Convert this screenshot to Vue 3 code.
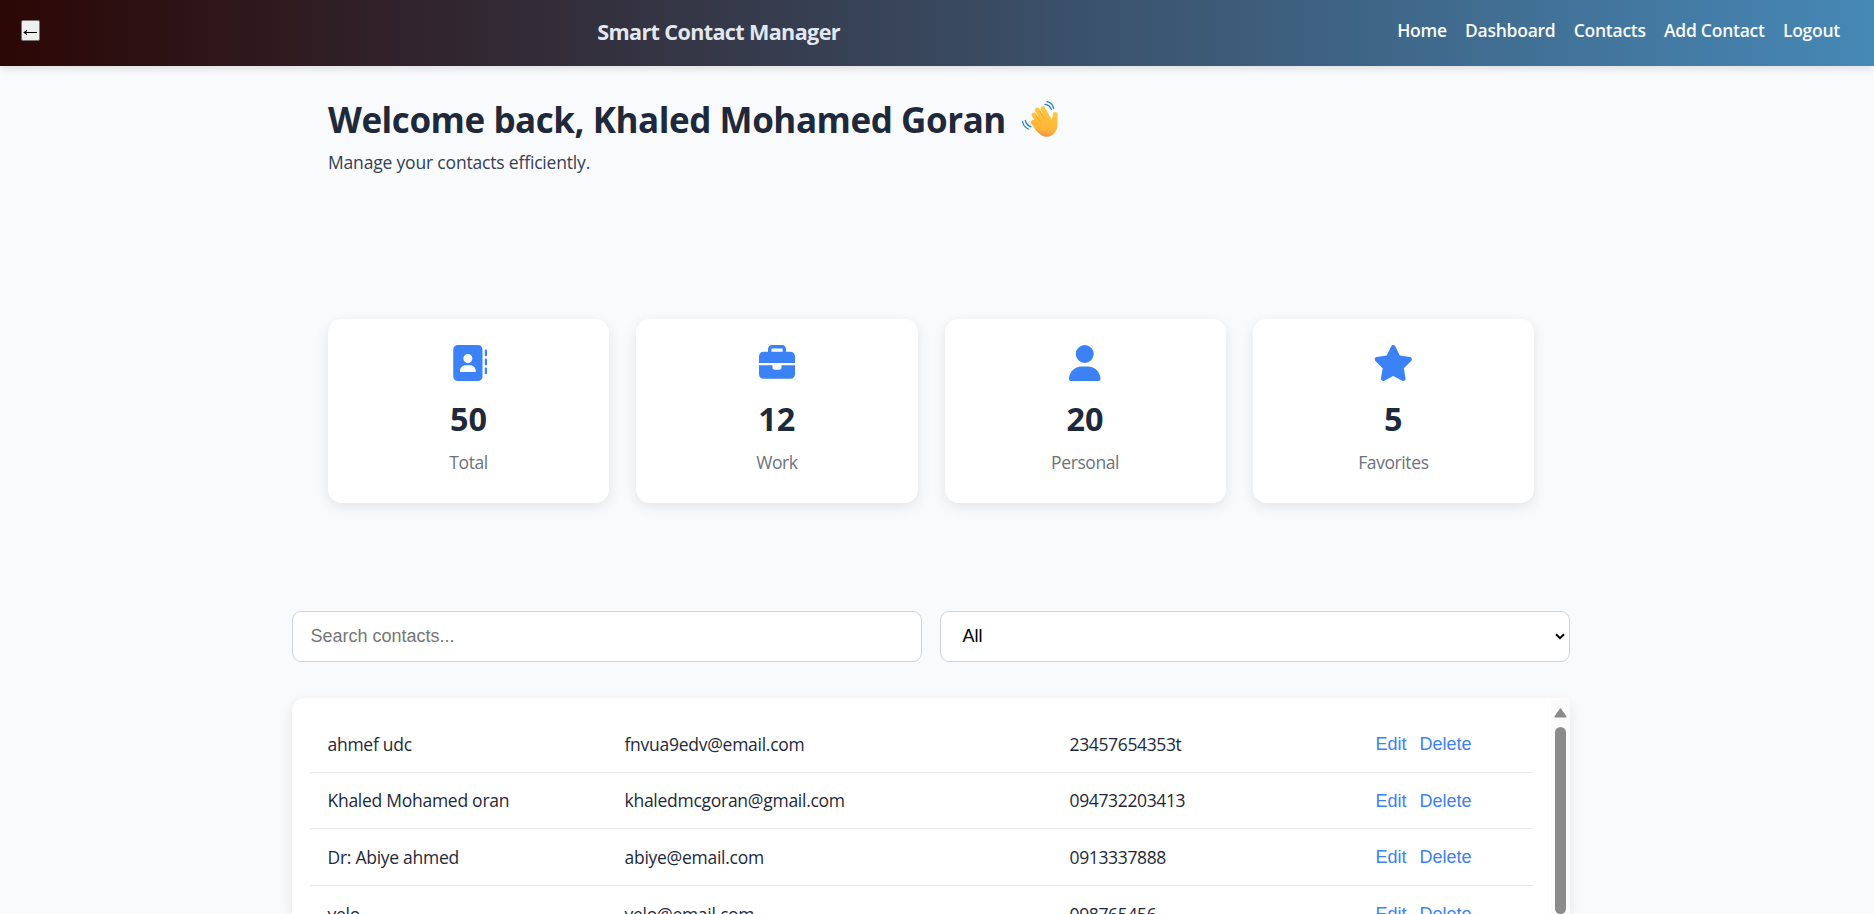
<script setup>
const links = ['Home', 'Dashboard', 'Contacts', 'Add Contact', 'Logout']
const stats = [
  { label: 'Total', value: 50, box: '0 0 512 512', w: 'w-512', d: 'M96 0C60.7 0 32 28.7 32 64V448c0 35.3 28.7 64 64 64H384c35.3 0 64-28.7 64-64V64c0-35.3-28.7-64-64-64H96zM208 288h64c44.2 0 80 35.8 80 80c0 8.8-7.2 16-16 16H144c-8.8 0-16-7.2-16-16c0-44.2 35.8-80 80-80zm-32-96a64 64 0 1 1 128 0 64 64 0 1 1 -128 0zM512 80c0-8.8-7.2-16-16-16s-16 7.2-16 16v64c0 8.8 7.2 16 16 16s16-7.2 16-16V80zM496 192c-8.8 0-16 7.2-16 16v64c0 8.8 7.2 16 16 16s16-7.2 16-16V208c0-8.8-7.2-16-16-16zm16 144c0-8.8-7.2-16-16-16s-16 7.2-16 16v64c0 8.8 7.2 16 16 16s16-7.2 16-16V336z' },
  { label: 'Work', value: 12, box: '0 0 512 512', w: 'w-512', d: 'M184 48H328c4.4 0 8 3.6 8 8V96H176V56c0-4.4 3.6-8 8-8zm-56 8V96H64C28.7 96 0 124.7 0 160v96H192 320 512V160c0-35.3-28.7-64-64-64H384V56c0-30.9-25.1-56-56-56H184c-30.9 0-56 25.1-56 56zM512 288H320v32c0 17.7-14.3 32-32 32H224c-17.7 0-32-14.3-32-32V288H0V416c0 35.3 28.7 64 64 64H448c35.3 0 64-28.7 64-64V288z' },
  { label: 'Personal', value: 20, box: '0 0 448 512', w: 'w-448', d: 'M224 256A128 128 0 1 0 224 0a128 128 0 1 0 0 256zm-45.7 48C79.8 304 0 383.8 0 482.3C0 498.7 13.3 512 29.7 512H418.3c16.4 0 29.7-13.3 29.7-29.7C448 383.8 368.2 304 269.7 304H178.3z' },
  { label: 'Favorites', value: 5, box: '0 0 576 512', w: 'w-576', d: 'M316.9 18C311.6 7 300.4 0 288.1 0s-23.4 7-28.8 18L195 150.3 51.4 171.5c-12 1.8-22 10.2-25.7 21.7s-.7 24.2 7.9 32.7L137.8 329 113.2 474.7c-2 12 3 24.2 12.9 31.3s23 8 33.8 2.3l128.3-68.5 128.3 68.5c10.8 5.7 23.9 4.9 33.8-2.3s14.9-19.3 12.9-31.3L438.5 329 542.7 225.9c8.6-8.5 11.7-21.2 7.9-32.7s-13.7-19.9-25.7-21.7L381.2 150.3 316.9 18z' },
]
const contacts = [
  { name: 'ahmef udc', email: 'fnvua9edv@email.com', phone: '23457654353t' },
  { name: 'Khaled Mohamed oran', email: 'khaledmcgoran@gmail.com', phone: '094732203413' },
  { name: 'Dr: Abiye ahmed', email: 'abiye@email.com', phone: '0913337888' },
  { name: 'yelo', email: 'yelo@email.com', phone: '098765456' },
]
</script>

<template>
  <div class="page">
    <header class="nav">
      <button class="back" aria-label="Back">
        <svg viewBox="0 0 15 9" width="15" height="9"><path d="M1.5 4.5H14M4 2.5L1.2 4.5L4 6.5" fill="none" stroke="#000" stroke-width="1.1" /></svg>
      </button>
      <div class="brand">Smart Contact Manager</div>
      <nav class="links">
        <a v-for="l in links" :key="l">{{ l }}</a>
      </nav>
    </header>

    <section class="welcome">
      <h1>
        <span>Welcome back, Khaled Mohamed Goran</span>
        <svg class="wave" viewBox="0 0 38 38" width="38" height="38">
          <defs>
            <linearGradient id="skin" gradientUnits="userSpaceOnUse" x1="27" y1="6" x2="20" y2="37">
              <stop offset="0" stop-color="#ffca42" /><stop offset="0.75" stop-color="#fdb437" /><stop offset="1" stop-color="#f08a4c" />
            </linearGradient>
          </defs>
          <g fill="none" stroke="url(#skin)" stroke-linecap="round">
            <path d="M12 22.5L18 29" stroke-width="4.6" />
            <path d="M13 15L20.5 24.5" stroke-width="4.8" />
            <path d="M16.2 10L23.5 21" stroke-width="4.8" />
            <path d="M21.8 8.5L28 20" stroke-width="4.8" />
            <path d="M34.2 14.5L33.3 23" stroke-width="4.8" />
          </g>
          <path d="M11 21L19 15L25 11.5L29.5 18C30.8 19.4 31.4 18.5 32 16L36.6 15.5L36.4 26C35.8 32 31 36.8 25.5 36.8C21 36.8 17 33 13.5 28.5Z" fill="url(#skin)" />
          <path d="M15 16L19.5 22M18.5 11L23.3 18.5" stroke="#e8912f" stroke-width="0.7" fill="none" />
          <path d="M24 4.3C27.2 4.6 29.4 6.4 30.3 9.5M26 1.6C29.5 2.4 32 5 32.6 8.5M4.3 20.5C5 23.3 7 25.7 10 26.8M1.6 21.5C2 24.8 4 27.5 7.3 29" fill="none" stroke="#2683c9" stroke-width="1.3" stroke-linecap="round" />
        </svg>
      </h1>
      <p>Manage your contacts efficiently.</p>
    </section>

    <section class="stats">
      <article v-for="s in stats" :key="s.label" class="card">
        <svg :class="['icon', s.w]" :viewBox="s.box"><path :d="s.d" /></svg>
        <strong>{{ s.value }}</strong>
        <span>{{ s.label }}</span>
      </article>
    </section>

    <section class="filters">
      <input type="text" placeholder="Search contacts..." />
      <div class="select">
        <span>All</span>
        <svg viewBox="0 0 10 7" width="10" height="7"><path d="M1 1.2L5 5.2L9 1.2" fill="none" stroke="#000" stroke-width="2" /></svg>
      </div>
    </section>

    <section class="panel">
      <div class="rows">
        <div v-for="c in contacts" :key="c.name" class="row">
          <span>{{ c.name }}</span>
          <span>{{ c.email }}</span>
          <span class="phone">{{ c.phone }}</span>
          <span class="actions"><button>Edit</button><button>Delete</button></span>
        </div>
      </div>
      <div class="track">
        <svg viewBox="0 0 13 10" width="13" height="10"><path d="M6.5 1.2L11.8 8.8H1.2Z" fill="#8b8b8b" stroke="#8b8b8b" stroke-width="1.6" stroke-linejoin="round" /></svg>
        <div class="thumb"></div>
      </div>
    </section>
  </div>
</template>

<style>
body {
  margin: 0;
  overflow: hidden;
  background: #f9fafc;
}
</style>

<style scoped>
.page {
  box-sizing: border-box;
  height: 914px;
  overflow: hidden;
  background: #f9fafc;
  color: #1e293b;
  font-family: "Open Sans", "Noto Sans", sans-serif;
  font-size: 17.5px;
}
.nav {
  box-sizing: border-box;
  height: 66px;
  padding: 0 34px 0 21px;
  display: flex;
  align-items: center;
  justify-content: space-between;
  background: linear-gradient(90deg, #2b0705, #4688b6);
  box-shadow: 0 2px 9px rgba(0, 0, 0, 0.13);
}
.back {
  box-sizing: border-box;
  width: 19px;
  height: 21px;
  margin-top: -5px;
  padding: 3px 0 0;
  display: flex;
  align-items: center;
  justify-content: center;
  border: 1px solid #767676;
  border-radius: 2px;
  background: #efefef;
}
.brand {
  margin-top: -4px;
  color: #e2e8f0;
  font-size: 21.6px;
  font-weight: 700;
  letter-spacing: -0.64px;
}
.links {
  display: flex;
  gap: 18.2px;
  margin-top: -6px;
  color: #f9fafc;
  font-weight: 600;
  letter-spacing: -0.25px;
}
.welcome {
  width: 1206px;
  height: 253px;
  margin: 0 0 0 328px;
  padding-top: 28px;
  box-sizing: border-box;
}
h1 {
  margin: 0;
  height: 50px;
  display: flex;
  align-items: center;
  gap: 15px;
  font-size: 35px;
  font-weight: 700;
  letter-spacing: -0.45px;
  white-space: nowrap;
}
.welcome p {
  margin: 5px 0 0;
  line-height: 26px;
  color: #334155;
  letter-spacing: -0.18px;
}
.stats {
  width: 1206px;
  margin-left: 328px;
  display: grid;
  grid-template-columns: repeat(4, 1fr);
  gap: 27px;
}
.card {
  box-sizing: border-box;
  height: 184px;
  padding-top: 26px;
  display: flex;
  flex-direction: column;
  align-items: center;
  border-radius: 13.5px;
  background: #fff;
  box-shadow: 0 4px 14px rgba(0, 0, 0, 0.09);
}
.icon {
  height: 36px;
  fill: #3b82f6;
}
.w-448 { width: 31.5px; }
.w-512 { width: 36px; }
.w-576 { width: 40.5px; }
.card strong {
  margin-top: 15px;
  font-size: 32.4px;
  line-height: 44px;
}
.card span {
  margin-top: 9px;
  line-height: 26px;
  color: #6b7280;
  letter-spacing: -0.4px;
}
.filters {
  width: 1278px;
  margin: 108px 0 36px 292px;
  display: grid;
  grid-template-columns: 1fr 1fr;
  gap: 18px;
}
.filters input,
.select {
  box-sizing: border-box;
  height: 51px;
  border: 1px solid #cbd5e1;
  border-radius: 9px;
  background: #fff;
  font: 18px "Liberation Sans", sans-serif;
}
.filters input {
  padding: 0 17.5px 1px;
}
.filters input::placeholder {
  color: #757575;
}
.select {
  display: flex;
  align-items: center;
  justify-content: space-between;
  padding: 0 4px 0 21.5px;
  color: #000;
}
.panel {
  width: 1278px;
  height: 216px;
  margin-left: 292px;
  display: flex;
  border-radius: 13.5px 13.5px 0 0;
  background: #fff;
  box-shadow: 0 4px 14px rgba(0, 0, 0, 0.09);
}
.rows {
  width: 1223px;
  margin: 18px 18px 0;
}
.row {
  box-sizing: border-box;
  height: 56.6px;
  display: grid;
  grid-template-columns: 297px 445px 306px 1fr;
  align-items: center;
  border-bottom: 1px solid #e5e7eb;
  letter-spacing: -0.27px;
}
.row > span {
  padding-left: 17.5px;
}
.row .phone {
  letter-spacing: -0.36px;
}
.actions {
  display: flex;
  gap: 13px;
  padding-top: 2px;
}
.actions button {
  padding: 0;
  border: 0;
  background: none;
  color: #3b82f6;
  font: 18px "Liberation Sans", sans-serif;
}
.track {
  width: 19px;
  display: flex;
  flex-direction: column;
  align-items: center;
  padding-top: 10px;
  box-sizing: border-box;
  background: #fbfbfb;
}
.thumb {
  width: 11px;
  height: 187px;
  margin-top: 9px;
  border-radius: 5.5px;
  background: #8b8b8b;
}
</style>
